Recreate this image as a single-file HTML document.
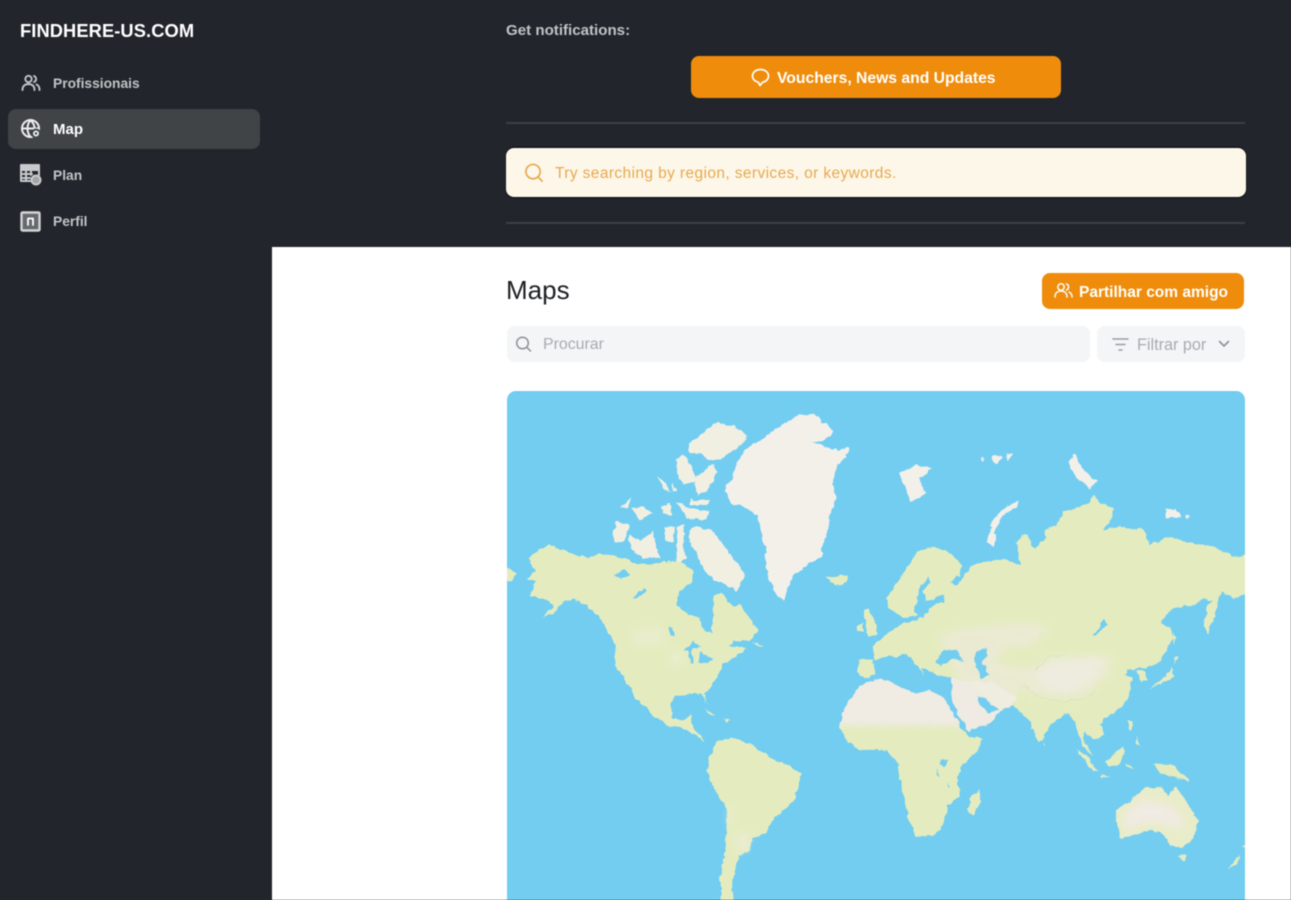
<!DOCTYPE html>
<html lang="pt"><head><meta charset="utf-8"><title>Maps</title>
<style>
*{box-sizing:border-box;margin:0;padding:0}
html,body{width:1291px;height:900px;overflow:hidden;background:#22262c}
body{font-family:"Liberation Sans",sans-serif;position:relative}
#w{position:absolute;inset:0;filter:blur(.65px)}
.a{position:absolute;white-space:nowrap}
.i{position:absolute;overflow:visible;fill:none;stroke-linecap:round;stroke-linejoin:round}
.m{left:53px;font-size:13.8px;font-weight:700;color:#c2c4c6;line-height:20px}
</style></head><body><div id="w">
<div class="a" style="left:272px;top:247px;width:1019px;height:653px;background:#fff"></div>
<div class="a" style="left:20px;top:20px;font-size:18.300px;font-weight:700;color:#fff;line-height:22px;letter-spacing:.1px">FINDHERE-US.COM</div>
<svg class="i" style="left:21px;top:73px" width="20" height="20" viewBox="0 0 20 20" stroke="#c2c4c6" stroke-width="1.900"><circle cx="7.500" cy="6" r="3.200"/><path d="M1.500 17c0-4 2.500-6 6-6s6 2 6 6"/><path d="M13 3a3.200 3.200 0 0 1 0 6M15.500 11.500c2 .8 3 2.700 3 5.500"/></svg>
<div class="a" style="left:8px;top:109px;width:252px;height:40px;background:#404447;border-radius:8px"></div>
<svg class="i" style="left:20px;top:118px" width="22" height="22" viewBox="0 0 22 22" stroke="#eceded" stroke-width="2"><circle cx="10.500" cy="10.500" r="8.500"/><path d="M2 10.500h17M10.500 2c-4 5-4 12 0 17M10.500 2c3 3 4 5 4 8"/><circle cx="16" cy="15.500" r="4" fill="#eceded" stroke="#404447"/><circle cx="16" cy="15.500" r="1.200" fill="#404447" stroke="none"/></svg>
<svg class="i" style="left:20px;top:164px" width="22" height="22" viewBox="0 0 22 22" stroke="#c8cacc" stroke-width="2"><rect x="1" y="1" width="18" height="5" fill="#c8cacc"/><path d="M1 6v11h10M1 10h11M1 14h9M6 6v11M11 6v5M19 6v5"/><circle cx="16" cy="16" r="4.500" fill="#a3a5a8" stroke="#c8cacc"/></svg>
<svg class="i" style="left:20px;top:211px" width="21" height="21" viewBox="0 0 21 21" stroke="#d2d4d6" stroke-width="2.400"><rect x="1.500" y="1.500" width="18" height="18" rx="1" fill="#66696d"/><path d="M8 14V7.500h5V14" stroke-width="1.800" stroke="#fff"/></svg>
<div class="a m" style="top:74px">Profissionais</div>
<div class="a m" style="top:120px;color:#fff;font-size:15px">Map</div>
<div class="a m" style="top:166px">Plan</div>
<div class="a m" style="top:212px">Perfil</div>

<div class="a" style="left:506px;top:21px;font-size:15.100px;font-weight:700;color:#c2c4c6;line-height:20px">Get notifications:</div>
<div class="a" style="left:691px;top:56px;width:370px;height:42px;background:#ef8c0b;border-radius:8px"></div>
<svg class="i" style="left:751px;top:68px" width="19" height="20" viewBox="0 0 19 20" stroke="#fff" stroke-width="1.700"><path d="M9.500 1.500c4.500 0 8 2.800 8 6.500 0 3.200-2.600 5.700-6 6.300L9 17.500l-1.800-3.300C4 13.500 1.500 11.200 1.500 8c0-3.700 3.500-6.500 8-6.500z"/></svg>
<div class="a" style="left:777px;top:69px;font-size:15.700px;font-weight:700;color:#fff;line-height:20px">Vouchers, News and Updates</div>
<div class="a" style="left:506px;top:122px;width:739px;height:2px;background:#3d4146"></div>
<div class="a" style="left:506px;top:148px;width:740px;height:49px;background:#fdf7e9;border-radius:8px;box-shadow:0 -1px 1px #0b0c10,0 1px 1px #0b0c10"></div>
<svg class="i" style="left:524px;top:163px" width="20" height="20" viewBox="0 0 21 21" stroke="#e9a94f" stroke-width="1.800"><circle cx="9.500" cy="9" r="7.500"/><path d="M15 15l4 4"/></svg>
<div class="a" style="left:555px;top:164px;font-size:15.500px;letter-spacing:.39px;color:#e8a94e;line-height:20px">Try searching by region, services, or keywords.</div>
<div class="a" style="left:506px;top:222px;width:739px;height:2px;background:#3d4146"></div>

<div class="a" style="left:506px;top:276px;font-size:26px;color:#1d1f23;line-height:28px">Maps</div>
<div class="a" style="left:1042px;top:273px;width:202px;height:36px;background:#ef8c0b;border-radius:8px"></div>
<svg class="i" style="left:1054px;top:282px" width="19" height="18" viewBox="0 0 19 18" stroke="#fff" stroke-width="1.500"><circle cx="7" cy="5" r="3.200"/><path d="M1 15c0-4 2.500-6 6-6s6 2 6 6M12.500 2a3.200 3.200 0 0 1 0 6M15 10c1.800.8 3 2.500 3 5"/></svg>
<div class="a" style="left:1079px;top:283px;font-size:15.500px;font-weight:700;color:#fff;line-height:20px">Partilhar com amigo</div>
<div class="a" style="left:507px;top:326px;width:583px;height:36px;background:#f3f5f6;border-radius:8px"></div>
<svg class="i" style="left:515px;top:336px" width="17" height="17" viewBox="0 0 17 17" stroke="#8e9296" stroke-width="1.500"><circle cx="7.500" cy="7" r="5.800"/><path d="M12 11.500l3.500 3.500"/></svg>
<div class="a" style="left:543px;top:335px;font-size:15.900px;color:#a8acb0;line-height:20px">Procurar</div>
<div class="a" style="left:1097px;top:326px;width:148px;height:36px;background:#f3f5f6;border-radius:8px"></div>
<svg class="i" style="left:1112px;top:337px" width="17" height="15" viewBox="0 0 17 15" stroke="#9a9ea2" stroke-width="1.500"><path d="M1 2h15M4 7.500h9M7 13h3"/></svg>
<div class="a" style="left:1137px;top:335px;font-size:16.200px;color:#a8acb0;line-height:20px">Filtrar por</div>
<svg class="i" style="left:1218px;top:340px" width="12" height="8" viewBox="0 0 12 8" stroke="#8e9296" stroke-width="1.600"><path d="M1.500 1.500L6 6l4.500-4.500"/></svg>

<svg class="a" style="left:507px;top:391px" width="738" height="509" viewBox="507 391 738 509">
<defs>
<clipPath id="c"><rect x="507" y="391" width="738" height="530" rx="9"/></clipPath>
<linearGradient id="af" gradientUnits="userSpaceOnUse" x1="0" y1="1008" x2="0" y2="1036"><stop offset="0" stop-color="#f0ebe3"/><stop offset="1" stop-color="#e4ecbf"/></linearGradient>
<filter id="b" x="-30%" y="-30%" width="160%" height="160%"><feGaussianBlur stdDeviation="12"/></filter>
<filter id="r" filterUnits="userSpaceOnUse" x="480" y="380" width="800" height="560" color-interpolation-filters="sRGB"><feTurbulence type="fractalNoise" baseFrequency=".16" numOctaves="2" seed="4" result="n"/><feDisplacementMap in="SourceGraphic" in2="n" scale="5" xChannelSelector="R" yChannelSelector="G"/></filter>
</defs>
<g clip-path="url(#c)">
<rect x="507" y="391" width="738" height="530" fill="#72cdf1"/>
<g filter="url(#r)">
<g transform="translate(500 385) scale(.33333)">
<path fill="#f3f0ea" d="M830 130L870 105 900 90 950 92 975 115 1000 140 985 160 940 170 985 190 1020 195 1050 185 1040 215 1015 235 1005 260 1000 300 1008 345 990 390 985 430 965 490 970 510 930 535 880 570 860 620 850 650 825 620 805 580 795 530 800 500 785 450 770 390 730 365 690 355 675 310 700 280 705 240 740 190 790 160Z"/>
<path fill="#f1efe2" d="M565 175L600 150 650 112 705 125 742 150 725 180 690 205 655 225 625 225 600 205 570 205Z"/>
<path fill="#f1efe2" d="M530 225L550 205 575 245 590 290 550 300 530 260ZM585 280L640 235 650 260 625 320 590 330ZM470 275L495 290 510 320 490 310ZM515 295L530 320 515 320ZM360 368L395 335 380 370ZM395 370L430 365 460 385 420 405ZM485 365L510 355 515 390 490 385ZM530 350L570 370 625 380 620 405 560 400 545 375ZM570 345L630 345 625 360 570 360ZM385 450L420 465 460 440 470 490 480 520 430 520 395 490ZM340 440L350 410 390 420 375 470 345 470ZM565 440L590 425 635 435 670 480 700 520 735 565 710 620 680 600 640 585 610 550 590 510 570 470ZM495 430L525 425 520 470 495 465ZM530 425L555 420 545 480 560 520 530 540Z"/>
<path fill="#e4ecbf" d="M85 520L110 500 145 480 200 500 265 520 300 505 340 510 390 530 440 540 490 530 540 530 580 555 575 590 540 620 530 655 550 680 600 700 615 740 635 745 640 690 640 630 665 625 700 665 720 660 750 700 775 735 755 765 700 770 690 785 740 790 700 820 665 840 650 880 625 915 610 925 622 955 605 925 570 925 525 935 510 965 520 1000 550 1010 570 990 580 1030 600 1050 615 1075 590 1050 540 1025 500 1020 470 1000 430 960 395 910 365 870 345 840 350 780 330 750 300 700 260 660 220 640 190 650 165 680 125 700 160 665 130 640 90 630 110 590 80 580 110 560Z"/>
<path fill="#eeeed9" filter="url(#b)" opacity=".5" d="M400 730h90v50h-90zM510 800h40v40h-40z"/>
<path fill="#72cdf1" d="M340 570L375 555 390 570 360 585ZM395 640L430 610 440 620 410 640ZM505 725L520 730 525 755 510 750ZM550 795L580 770 605 785 575 790 580 835 570 835 565 800ZM600 800L640 822 652 815 620 835 595 835Z"/>
<path fill="#e4ecbf" d="M395 915L415 925 435 965 410 945ZM610 975L650 990 635 990ZM670 1000L695 1005 680 1010ZM760 770L790 785 770 785ZM15 545L50 565 35 590 15 585ZM980 570L1000 575 1040 570 1040 590 1010 605 990 590Z"/>
<path fill="#e4ecbf" d="M650 1070L690 1058 750 1075 800 1110 850 1135 905 1165 895 1205 880 1250 860 1270 825 1295 800 1340 760 1360 750 1395 715 1415 705 1460 695 1500 710 1600 665 1600 660 1480 675 1400 680 1330 680 1270 645 1215 620 1160 630 1115Z"/>
<path fill="#efeddf" filter="url(#b)" opacity=".6" d="M685 1265L700 1265 695 1320 685 1330ZM710 1350L750 1340 745 1390 715 1410Z"/>
</g>
<g transform="translate(820 385) scale(.33333)">
<path fill="#f3f0ea" d="M235 260L260 255 290 240 335 250 320 270 295 275 320 325 270 350 255 300ZM745 230L765 205 780 240 830 290 810 310 770 280ZM500 470L515 410 550 370 595 345 590 365 550 390 525 440 525 485ZM1035 370L1065 375 1085 395 1040 400ZM1095 390L1110 395 1100 402ZM480 215l15 5-10 8zM520 210l25 5-15 22-15-10zM560 210l20-5-15 22z"/>
<path fill="#e4ecbf" d="M165 825L155 785 200 745 240 720 270 710 310 695 340 660 370 640 380 620 420 590 450 550 490 530 550 520 600 540 590 470 620 445 640 490 680 460 675 435 710 420 730 380 780 365 810 350 820 330 840 350 880 370 875 400 850 435 900 425 950 435 970 430 990 480 1050 455 1100 470 1150 480 1190 490 1240 515 1300 505 1300 620 1240 640 1205 620 1190 650 1150 640 1120 660 1060 670 1030 700 1025 715 1050 730 1060 760 1040 790 1020 830 975 850 950 850 925 855 935 880 930 920 910 960 880 985 850 1000 840 1020 855 1050 825 1065 790 1040 790 1060 810 1100 820 1115 790 1085 770 1020 745 985 720 1000 690 1020 670 1060 655 1070 630 1010 610 990 580 960 545 975 540 960 440 960 395 920 340 860 305 850 310 875 290 850 250 810 230 815 200 815Z"/>
<path fill="#e4ecbf" d="M200 640L260 550 290 500 345 485 400 510 425 545 410 590 400 620 370 630 320 650 290 690 250 700 230 680 205 670ZM115 825L160 825 165 870 135 880 115 870ZM950 855L975 860 982 890 960 885Z"/>
<path fill="#efeadf" filter="url(#b)" opacity=".6" d="M350 760L420 730 620 710 690 730 640 780 560 790 520 830 600 850 880 810 860 880 780 940 640 930 600 900 580 950 510 950 450 900 410 880 370 780Z"/>
<path fill="#f1eee6" filter="url(#b)" opacity=".6" d="M650 850L700 815 850 815 825 880 760 920 690 920 650 890Z"/>
<path fill="none" stroke="#dbe0bb" stroke-width="2" d="M640 860l50-45 50-5M610 900c20 20 50 45 120 50 40-10 70 0 90-30"/>
<path fill="#72cdf1" d="M465 800L500 790 505 810 485 830 510 870 480 880 465 830ZM345 830L370 795 410 795 430 830 395 820 360 845ZM280 680L300 610 325 575 330 590 310 620 320 650 370 630 375 650 330 660 300 690ZM390 595L410 570 420 580 410 600ZM820 750L855 700 860 720 830 750ZM220 690L230 685 235 710 222 705ZM920 855L950 850 945 880 915 870Z"/>
<path fill="#72cdf1" d="M135 885L170 870 180 840 215 815 240 822 270 860 285 850 250 810 262 808 300 850 310 880 320 855 340 872 395 880 395 930 330 930 240 915 190 890Z"/>
<path fill="#e4ecbf" d="M130 680L145 670 165 710 175 750 145 755ZM108 725L130 710 130 740 110 740ZM1150 720L1165 660 1200 620 1190 670 1165 745ZM990 910L1040 870 1055 845 1060 870 1040 890ZM1060 815L1075 820 1065 835ZM1060 745l10 10-10 25zM925 1010L940 1010 930 1040ZM950 1050L960 1085 948 1080ZM855 1130L880 1110 905 1085 915 1100 900 1140 870 1145ZM770 1095L800 1110 835 1160 815 1155ZM840 1170L875 1175 845 1178ZM920 1135L940 1150 925 1150ZM1000 1135L1060 1140 1110 1190 1060 1175 1020 1165ZM450 1240L480 1210 480 1250 460 1290 445 1285ZM670 1070L680 1080 675 1085ZM1220 1450L1260 1410 1250 1440ZM1265 1385L1300 1375 1300 1405Z"/>
<path fill="url(#af)" d="M65 990L90 940 130 895 190 880 240 905 290 925 330 915 378 945 420 1020 445 1055 490 1060 460 1110 420 1150 410 1190 420 1230 385 1260 365 1330 340 1350 290 1355 265 1300 250 1230 230 1130 200 1095 120 1095 85 1070 60 1030Z"/>
<path fill="#efebe2" d="M395 880L450 890 480 925 510 965 545 975 510 1015 445 1040 420 1000 392 940Z"/>
<path fill="#efece0" d="M450 890L520 890 590 940 580 960 545 975 510 960Z"/>
<path fill="#72cdf1" d="M470 930L490 935 535 975 505 985 480 960Z"/>
<path fill="#72cdf1" d="M365 1125L385 1122 375 1145 362 1140ZM350 1150l8 25-8-5zM382 1190l8 18-6-2z"/>
<path fill="#e9ecc9" d="M885 1275L930 1250 975 1210 1025 1205 1045 1235 1065 1205 1100 1250 1135 1305 1120 1360 1085 1390 1050 1380 1030 1345 985 1335 900 1360 890 1310Z"/>
<path fill="#f0ebe3" filter="url(#b)" d="M915 1285L960 1245 1040 1255 1085 1295 1085 1335 1040 1320 985 1310 915 1335Z"/>
<path fill="#e4ecbf" d="M1075 1410L1100 1412 1090 1430Z"/>
</g>
</g>
</g>
</svg>
</div></body></html>
